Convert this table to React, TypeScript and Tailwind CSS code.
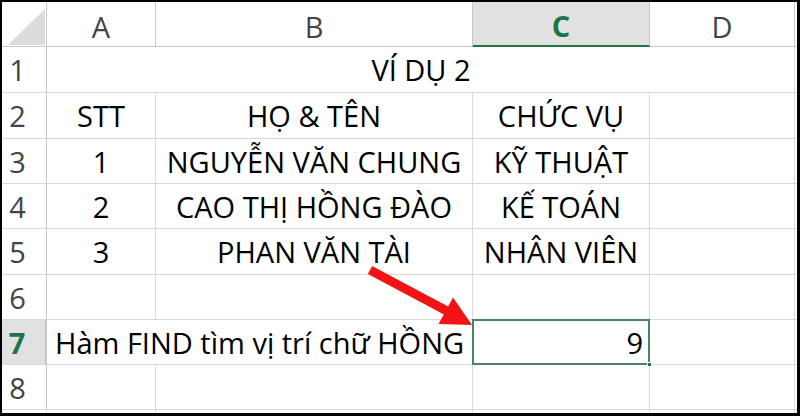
import React from "react";

const GRID = "border-[#d9d9d9]";
const font = "font-['Open_Sans',sans-serif]";

function H({ children, sel, last }: { children?: React.ReactNode; sel?: boolean; last?: boolean }) {
  return (
    <div
      className={`flex items-center justify-center border-b ${last ? "" : "border-r"} border-[#c8c8c8] ${
        sel ? "bg-[#e1e1e1] text-[#217346] font-bold border-b-2 border-b-[#217346]" : "text-[#444]"
      } pt-[4px]`}
    >
      {children}
    </div>
  );
}

function R({ n, sel }: { n: number; sel?: boolean }) {
  return (
    <div
      className={`flex items-center justify-center pr-[13px] border-b border-r ${
        sel ? "bg-[#e1e1e1] text-[#217346] font-bold border-r-2 border-r-[#217346]" : "text-[#444]"
      } border-b-[#d9d9d9] border-r-[#c8c8c8]`}
    >
      {n}
    </div>
  );
}

function C({
  children,
  span,
  align = "center",
  noR,
  className = "",
}: {
  children?: React.ReactNode;
  span?: string;
  align?: "center" | "left" | "right";
  noR?: boolean;
  className?: string;
}) {
  const j = align === "center" ? "justify-center" : align === "left" ? "justify-start pl-[8px]" : "justify-end pr-[6px]";
  return (
    <div className={`flex items-center ${j} border-b ${noR ? "" : "border-r"} ${GRID} text-black whitespace-nowrap ${span ?? ""} ${className}`}>
      {children}
    </div>
  );
}

export default function App() {
  return (
    <div className={`w-[800px] h-[418px] bg-white ${font} text-[29px] leading-none relative`}>
      <div className="w-[800px] h-[416px] border-t-2 border-l-2 border-r-[3px] border-b-[3px] border-black">
        <div className="grid grid-cols-[45px_109px_317px_177px_145px_1fr] grid-rows-[45px_46px_46px_45px_45px_46px_45px_45px_45px_1fr] h-full">
          {/* header row */}
          <div className="relative border-b border-r border-[#c8c8c8]">
            <svg className="absolute left-[6px] top-[7px]" width="38" height="37" viewBox="0 0 38 37">
              <polygon points="0,36 37,0 37,36" fill="#dcdcdc" />
            </svg>
          </div>
          <H>A</H>
          <H>B</H>
          <H sel>C</H>
          <H>D</H>
          <div className="border-b border-[#c8c8c8]" />

          {/* row 1 */}
          <R n={1} />
          <C span="col-span-4" className="pl-[1px]">VÍ DỤ 2</C>
          <C noR />

          {/* row 2 */}
          <R n={2} />
          <C>STT</C>
          <C>HỌ &amp; TÊN</C>
          <C>CHỨC VỤ</C>
          <C />
          <C noR />

          {/* row 3 */}
          <R n={3} />
          <C>1</C>
          <C>NGUYỄN VĂN CHUNG</C>
          <C>KỸ THUẬT</C>
          <C />
          <C noR />

          {/* row 4 */}
          <R n={4} />
          <C>2</C>
          <C>CAO THỊ HỒNG ĐÀO</C>
          <C>KẾ TOÁN</C>
          <C />
          <C noR />

          {/* row 5 */}
          <R n={5} />
          <C>3</C>
          <C>PHAN VĂN TÀI</C>
          <C>NHÂN VIÊN</C>
          <C />
          <C noR />

          {/* row 6 */}
          <R n={6} />
          <C />
          <C />
          <C />
          <C />
          <C noR />

          {/* row 7 */}
          <R n={7} sel />
          <C span="col-span-2" align="left">Hàm FIND tìm vị trí chữ HỒNG</C>
          <div className={`relative flex items-center justify-end pr-[6px] border-b border-r ${GRID} text-black`}>
            9
            <div className="absolute -top-px -left-px -right-px -bottom-px border-2 border-[#4d8064] z-10" />
            <div className="absolute -right-[3px] -bottom-[3px] w-[5px] h-[5px] bg-[#217346] border border-white z-20" />
          </div>
          <C />
          <C noR />

          {/* row 8 */}
          <R n={8} />
          <C />
          <C />
          <C />
          <C />
          <C noR />

          {/* filler */}
          <div className="border-r border-[#d9d9d9]" />
          <div className="border-r border-[#d9d9d9]" />
          <div className="border-r border-[#d9d9d9]" />
          <div className="border-r border-[#d9d9d9]" />
          <div className="border-r border-[#d9d9d9]" />
          <div />
        </div>
      </div>
      <svg className="absolute left-0 top-0 pointer-events-none z-30" width="800" height="418" viewBox="0 0 800 418">
        <line x1="370" y1="270" x2="447" y2="311" stroke="#f21414" strokeWidth="9" />
        <polygon points="472,325 438.5,324 453,297.5" fill="#f21414" />
      </svg>
    </div>
  );
}
